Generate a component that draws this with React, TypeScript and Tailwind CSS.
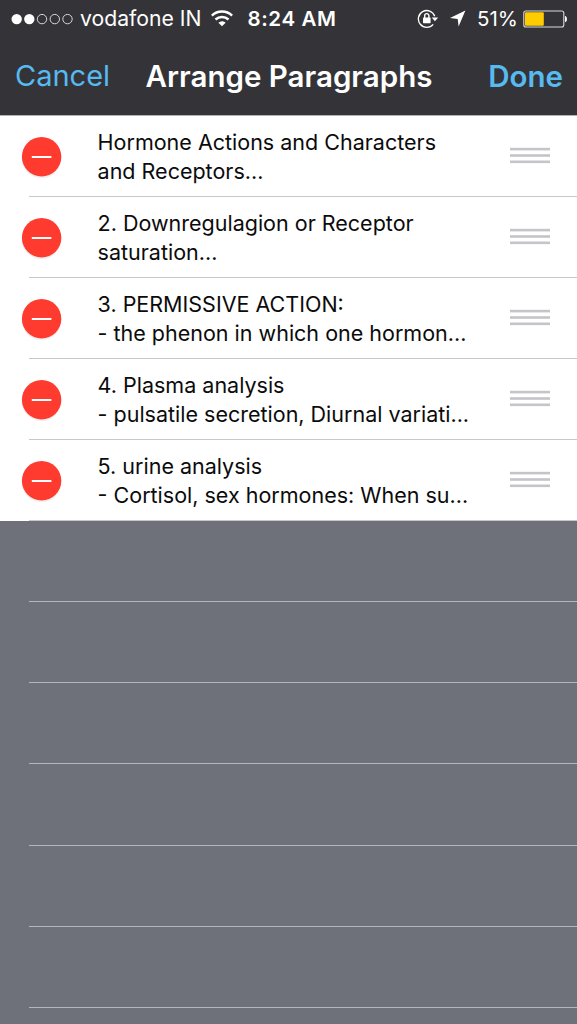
const paragraphs = [
  ['Hormone Actions and Characters', 'and Receptors...'],
  ['2. Downregulagion or Receptor', 'saturation...'],
  ['3. PERMISSIVE ACTION:', '- the phenon in which one hormon...'],
  ['4. Plasma analysis', '- pulsatile secretion, Diurnal variati...'],
  ['5. urine analysis', '- Cortisol, sex hormones: When su...'],
];

function SignalDots() {
  return (
    <svg className="ml-[11px] h-[14px] w-[64px] shrink-0" viewBox="11 11.4 64 14">
      <circle cx="16.7" cy="18.5" r="5.2" fill="#fff" />
      <circle cx="29.3" cy="18.5" r="5.2" fill="#fff" />
      {[42, 54.8, 67.5].map((cx) => (
        <circle key={cx} cx={cx} cy="18.5" r="4.7" fill="none" stroke="#d6d6d8" strokeWidth="1" />
      ))}
    </svg>
  );
}

function WifiIcon() {
  return (
    <svg className="ml-[10px] h-[17px] w-[22px] shrink-0" viewBox="0 0 22 17" fill="none" stroke="#fff" strokeWidth="2.5">
      <path d="M0.9 5.6C6.5 0.1 15.5 0.1 21.1 5.6" />
      <path d="M4.5 9.5C8.2 6 13.8 6 17.5 9.5" />
      <path d="M7.4 12.7C9.6 10.7 12.4 10.7 14.6 12.7L11 16.2Z" fill="#fff" stroke="none" />
    </svg>
  );
}

function RotationLockIcon() {
  return (
    <svg className="h-[20px] w-[22px] shrink-0" viewBox="0 0 22 20">
      <path d="M17.7 7.2A8.4 8.4 0 1 0 16.2 15.3" fill="none" stroke="#fff" strokeWidth="1.3" />
      <path d="M14.7 8.6H21.2L17.9 12.3Z" fill="#fff" />
      <rect x="6" y="8.6" width="7.6" height="5.6" rx="0.6" fill="#fff" />
      <path d="M7.7 9V6.7a2.1 2.1 0 0 1 4.2 0V9" fill="none" stroke="#fff" strokeWidth="1.4" />
    </svg>
  );
}

function LocationIcon() {
  return (
    <svg className="ml-[10px] h-[17px] w-[17px] shrink-0" viewBox="0 0 17 17">
      <path d="M16.4 0.6L9.6 16.4L8.7 9L1 8Z" fill="#fff" />
    </svg>
  );
}

function BatteryIcon() {
  return (
    <svg className="ml-[5px] h-[18px] w-[46px] shrink-0" viewBox="0 0 46 18">
      <rect x="0.8" y="1" width="40" height="16" rx="2" fill="none" stroke="#d9d9d9" strokeWidth="1.1" />
      <rect x="2" y="2.2" width="18.8" height="13.6" rx="1" fill="#ffcc00" />
      <path d="M42 6.1C44.6 6.4 44.6 12 42 12.3Z" fill="#fff" />
    </svg>
  );
}

function DeleteIcon() {
  return (
    <svg className="mt-[18px] ml-[19px] h-[46px] w-[46px] shrink-0" viewBox="19 134 46 46">
      <circle cx="41.6" cy="158.2" r="20" fill="#f1f1f1" />
      <circle cx="41.6" cy="156.8" r="19.7" fill="#ff3b30" />
      <rect x="31.8" y="156" width="19.6" height="2" fill="#fff" />
    </svg>
  );
}

function DragHandle() {
  return (
    <svg className="mt-[31px] ml-auto mr-[27px] h-[17px] w-[40px] shrink-0" viewBox="0 0 40 17" fill="#c5c5c9">
      <rect y="0.8" width="40" height="2.6" />
      <rect y="7.2" width="40" height="2.6" />
      <rect y="13.5" width="40" height="2.6" />
    </svg>
  );
}

export default function App() {
  return (
    <div className="flex h-[1024px] w-[577px] flex-col overflow-hidden bg-[#6e7179] font-['Inter','Liberation_Sans',sans-serif]">
      <header className="h-[116px] shrink-0 border-b border-[#b2b2b5] bg-[#343438] text-white">
        <div className="flex h-[37px] items-center whitespace-nowrap">
          <SignalDots />
          <span className="ml-[5px] text-[21.2px] leading-[37px]">vodafone IN</span>
          <WifiIcon />
          <span className="ml-[14px] text-[20.5px] leading-[37px] font-semibold tracking-[0.6px]">8:24 AM</span>
          <div className="mr-[8px] ml-auto flex items-center">
            <RotationLockIcon />
            <LocationIcon />
            <span className="ml-[11px] text-[20.5px] leading-[37px]">51%</span>
            <BatteryIcon />
          </div>
        </div>
        <nav className="grid h-[78px] grid-cols-[1fr_auto_1fr] items-center whitespace-nowrap pr-[14px] pl-[15px] leading-[78px]">
          <button className="justify-self-start text-[29px] text-[#57baf0]">Cancel</button>
          <h1 className="text-[29.5px] font-semibold text-white">Arrange Paragraphs</h1>
          <button className="justify-self-end text-[29.5px] font-semibold text-[#57baf0]">Done</button>
        </nav>
      </header>
      <ul className="shrink-0 bg-white">
        {paragraphs.map(([first, second]) => (
          <li key={first} className="flex h-[81px] flex-col">
            <div className="flex h-[80px]">
              <DeleteIcon />
              <div className="ml-[32.6px] pt-[12px] text-[21.5px] leading-[29px] whitespace-nowrap text-[#0b0b0b]">
                <p>{first}</p>
                <p>{second}</p>
              </div>
              <DragHandle />
            </div>
            <div className="ml-[29px] h-px bg-[#c8c7cc]" />
          </li>
        ))}
      </ul>
      <div className="shrink-0">
        {[1, 2, 3, 4, 5, 6].map((row) => (
          <div key={row} className="ml-[29px] h-[81.13px] border-b border-[#b5b6bb]" />
        ))}
      </div>
    </div>
  );
}
